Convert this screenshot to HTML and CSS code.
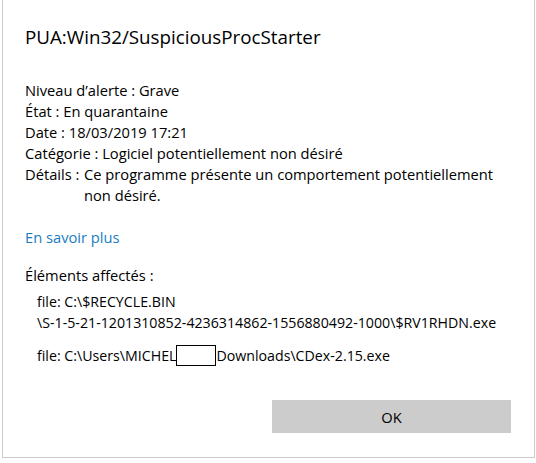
FILE: index.html
```html
<!DOCTYPE html>
<html lang="fr">
<head>
    <meta charset="UTF-8">
    <meta name="viewport" content="width=device-width, initial-scale=1.0">
    <title>PUA:Win32/SuspiciousProcStarter</title>
    <link rel="stylesheet" href="styles.css">
</head>
<body>
    <div class="dialog">
        <h1 class="title">PUA:Win32/SuspiciousProcStarter</h1>

        <!-- Threat details -->
        <div class="info">
            <div class="line">Niveau d’alerte&nbsp;: Grave</div>
            <div class="line">État&nbsp;: En quarantaine</div>
            <div class="line">Date&nbsp;: 18/03/2019 17:21</div>
            <div class="line">Catégorie&nbsp;: Logiciel potentiellement non désiré</div>
            <div class="line details">
                <span class="label">Détails&nbsp;:</span>
                <span class="value">Ce programme présente un comportement potentiellement non désiré.</span>
            </div>
        </div>

        <a class="more" href="#">En savoir plus</a>

        <!-- Affected items -->
        <div class="affected">
            <div class="affected-title">Éléments affectés&nbsp;:</div>
            <div class="file">file: C:\$RECYCLE.BIN<br>\S-1-5-21-1201310852-4236314862-1556880492-1000\$RV1RHDN.exe</div>
            <div class="file">file: C:\Users\MICHEL<span class="hidden"></span>Downloads\CDex-2.15.exe</div>
        </div>

        <div class="actions">
            <button class="ok">OK</button>
        </div>
    </div>
</body>
</html>
```

FILE: styles.css
```css
body {
    margin: 0;
    padding: 0;
    background-color: #ffffff;
    font-family: "Open Sans", "Noto Sans", sans-serif;
    color: #000000;
}
.dialog {
    width: 533px;
    height: 458px;
    margin-left: 2px;
    border: 1px solid #cccccc;
    border-top: none;
    background-color: white;
    box-sizing: border-box;
    padding: 23px 23px 0 22px;
}
.title {
    margin: 0;
    font-size: 18.8px;
    font-weight: normal;
    line-height: 28px;
}
.info {
    margin-top: 29px;
    font-size: 14.7px;
    line-height: 21px;
}
.details {
    display: flex;
}
.details .label {
    flex: none;
    width: 59px;
}
.details .value {
    width: 415px;
}
.more {
    display: inline-block;
    margin-top: 21px;
    font-size: 14.7px;
    line-height: 21px;
    color: #1a7dc0;
    text-decoration: none;
}
.affected {
    margin-top: 17px;
    font-size: 14.7px;
    line-height: 21px;
}
.file {
    margin-top: 5px;
    padding-left: 12px;
    font-size: 14.2px;
}
.file + .file {
    margin-top: 12px;
}
.hidden {
    display: inline-block;
    width: 38px;
    height: 19px;
    border: 1px solid #000;
    vertical-align: -5px;
}
.actions {
    display: flex;
    justify-content: flex-end;
    margin-top: 34px;
    padding-right: 0;
}
.ok {
    width: 239px;
    height: 33px;
    background-color: #cccccc;
    border: none;
    font-family: inherit;
    font-size: 14.7px;
    color: #000;
}
```
